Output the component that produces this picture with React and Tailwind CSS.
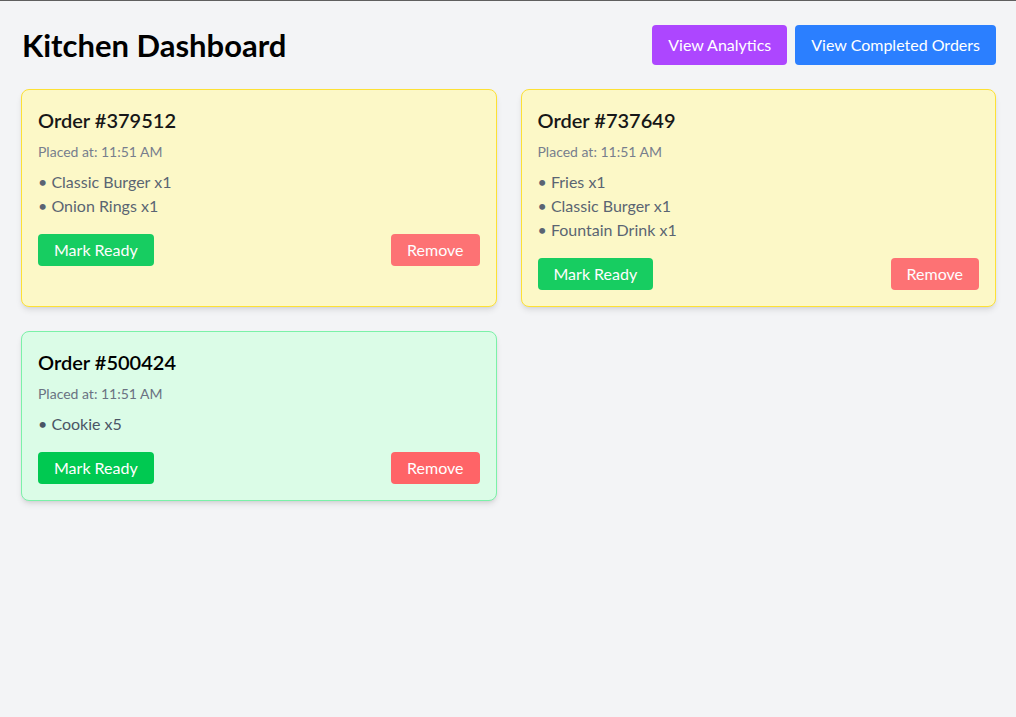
import React from "react";

const orders = [
  { id: "379512", items: ["Classic Burger x1", "Onion Rings x1"], status: "pending" },
  { id: "737649", items: ["Fries x1", "Classic Burger x1", "Fountain Drink x1"], status: "pending" },
  { id: "500424", items: ["Cookie x5"], status: "ready" },
];

function OrderCard({ order }) {
  const pending = order.status === "pending";
  return (
    <div
      className={
        pending
          ? "flex flex-col rounded-lg border border-yellow-300 bg-yellow-100 p-4 shadow-md opacity-90"
          : "flex flex-col rounded-lg border border-green-300 bg-green-100 p-4 shadow-md"
      }
    >
      <h2 className="text-xl font-semibold leading-7 text-black">Order #{order.id}</h2>
      <p className="mt-2 text-sm leading-5 text-gray-500">Placed at: 11:51 AM</p>
      <ul className="mt-2">
        {order.items.map((it) => (
          <li key={it} className="h-6 text-base leading-6 text-gray-600">
            • {it}
          </li>
        ))}
      </ul>
      <div className="mt-4 flex items-center justify-between">
        <button className="rounded bg-green-500 px-4 py-1 text-base leading-6 text-white">Mark Ready</button>
        <button className="rounded bg-red-400 px-4 py-1 text-base leading-6 text-white">Remove</button>
      </div>
    </div>
  );
}

export default function App() {
  return (
    <div
      className="min-h-[717px] border-t border-[#5f5f5f] bg-gray-100 pl-[21px] pr-5 pt-6"
      style={{ fontFamily: '"Segoe UI", Lato, sans-serif' }}
    >
      <div className="mb-6 flex items-center justify-between">
        <h1 className="pl-px text-[31px] font-bold leading-9 text-black">Kitchen Dashboard</h1>
        <div className="flex gap-2">
          <button className="rounded bg-purple-500 px-4 py-2 text-base leading-6 text-white">View Analytics</button>
          <button className="rounded bg-blue-500 px-4 py-2 text-base leading-6 text-white">View Completed Orders</button>
        </div>
      </div>
      <div className="grid grid-cols-2 items-stretch gap-6">
        {orders.map((o) => (
          <OrderCard key={o.id} order={o} />
        ))}
      </div>
    </div>
  );
}
